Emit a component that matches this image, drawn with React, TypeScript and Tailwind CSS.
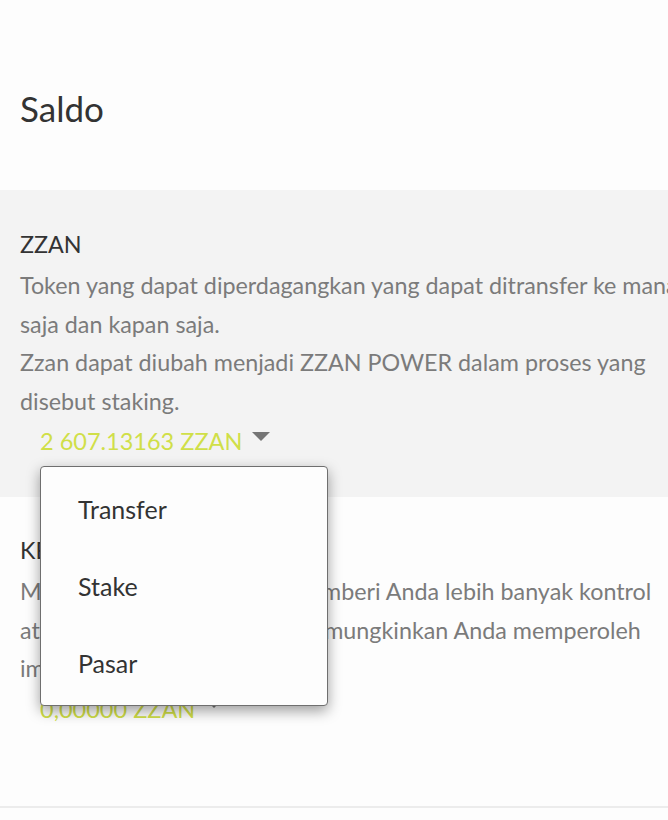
import React from "react";

const font = { fontFamily: "Lato, 'Noto Sans', sans-serif" };

function Caret() {
  return (
    <svg width="18" height="9" viewBox="0 0 18 9" className="ml-[10px] mt-[-12px] shrink-0">
      <path d="M0 0 H18 L9 9 Z" fill="#757575" />
    </svg>
  );
}

function Section({
  title,
  lines,
  amount,
  gray,
}: {
  title: string;
  lines: string[];
  amount: string;
  gray?: boolean;
}) {
  return (
    <div className={`${gray ? "bg-[#f3f3f3] h-[307px] pt-[35px]" : "h-[309px] pt-[34px]"} px-5`}>
      <div className="text-[23.3px] leading-[38px] text-[#333] whitespace-nowrap">{title}</div>
      <div className="mt-[3px] text-[23.3px] leading-[38.5px] text-[#7b7b7b]">
        {lines.map((l, i) => (
          <div key={i} className="whitespace-nowrap">{l}</div>
        ))}
      </div>
      <div className="mt-[3px] pl-5 flex items-center h-[38px]">
        <span className="text-[23.5px] text-[#d0df48] whitespace-nowrap">{amount}</span>
        <Caret />
      </div>
    </div>
  );
}

export default function App() {
  return (
    <div className="w-[668px] h-[820px] overflow-hidden bg-[#fdfdfd] relative" style={font}>
      <div className="h-[190px] px-5 flex items-center">
        <h1 className="text-[35px] text-[#333] mt-[26px]">Saldo</h1>
      </div>

      <Section
        gray
        title="ZZAN"
        lines={[
          "Token yang dapat diperdagangkan yang dapat ditransfer ke mana",
          "saja dan kapan saja.",
          "Zzan dapat diubah menjadi ZZAN POWER dalam proses yang",
          "disebut staking.",
        ]}
        amount="2 607.13163 ZZAN"
      />

      <Section
        title="KEKUATAN ZZAN"
        lines={[
          "Mata uang pengaruh yang memberi Anda lebih banyak kontrol",
          "atas pembayaran post dan memungkinkan Anda memperoleh",
          "imbalan kurasi.",
        ]}
        amount="0,00000 ZZAN"
      />
      <div className="h-[2px] bg-[#ececec]" />

      {/* dropdown menu */}
      <div className="absolute left-[40px] top-[466px] w-[288px] h-[240px] bg-[#fdfdfd] border-[1.5px] border-[#6f6f6f] rounded-[4px] shadow-[0_5px_14px_rgba(0,0,0,0.38)] py-[4px]">
        {["Transfer", "Stake", "Pasar"].map((item) => (
          <div key={item} className="h-[77px] flex items-center pl-[37px] text-[25px] text-[#333]">
            {item}
          </div>
        ))}
      </div>
    </div>
  );
}
